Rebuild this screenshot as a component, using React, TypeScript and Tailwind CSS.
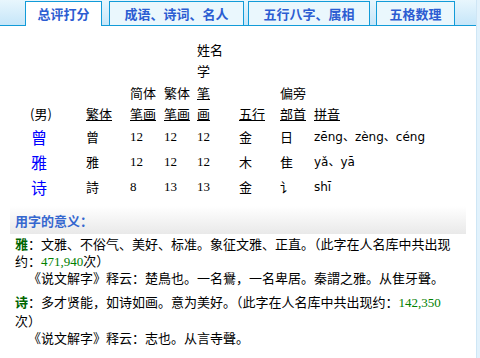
import React from "react";

const cjk = { fontFamily: '"Noto Sans CJK SC", sans-serif' };
const serif = { fontFamily: '"Liberation Serif", "Noto Sans CJK SC", serif' };
const pinyinFont = { fontFamily: '"DejaVu Sans", "Noto Sans CJK SC", sans-serif' };

const cols = ["w-[56px]", "w-[44px]", "w-[34px]", "w-[33px]", "w-[42px]", "w-[41px]", "w-[34px]", "flex-1"];

function Tab({ label, width, active }: { label: string; width: string; active?: boolean }) {
  return (
    <div
      className={`${width} flex items-center justify-center border-t border-l border-r border-[#129bd8] text-[13px] font-bold text-[#2c5dd2] ${
        active ? "h-[25px] bg-white -mb-px" : "h-[24px] bg-[#eaf7fd]"
      }`}
    >
      {label}
    </div>
  );
}

type Row = { ch: string; trad: string; s: string; t: string; n: string; wx: string; bs: string; py: string };

const rows: Row[] = [
  { ch: "曾", trad: "曾", s: "12", t: "12", n: "12", wx: "金", bs: "日", py: "zēng、zèng、céng" },
  { ch: "雅", trad: "雅", s: "12", t: "12", n: "12", wx: "木", bs: "隹", py: "yǎ、yā" },
  { ch: "诗", trad: "詩", s: "8", t: "13", n: "13", wx: "金", bs: "讠", py: "shī" },
];

export default function App() {
  return (
    <div className="w-[480px] h-[358px] flex bg-white overflow-hidden text-black" style={cjk}>
      <div className="w-[476px] flex flex-col">
        {/* tabs */}
        <div className="h-[26px] flex items-end border-b border-[#129bd8] bg-gradient-to-b from-[#e8f6fd] to-[#c6e6f9]">
          <div className="w-[25px]" />
          <Tab label="总评打分" width="w-[77px]" active />
          <div className="w-[7px]" />
          <Tab label="成语、诗词、名人" width="w-[135px]" />
          <div className="w-[4px]" />
          <Tab label="五行八字、属相" width="w-[122px]" />
          <div className="w-[6px]" />
          <Tab label="五格数理" width="w-[79px]" />
        </div>

        {/* table */}
        <div className="pl-[30px] pt-[13px] text-[13px]">
          <div className="flex items-end leading-[21px]">
            <div className={cols[0]}>(男)</div>
            <div className={cols[1]}>
              <span className="underline">繁体</span>
            </div>
            <div className={cols[2]}>
              <div>简体</div>
              <div className="underline">笔画</div>
            </div>
            <div className={cols[3]}>
              <div>繁体</div>
              <div className="underline">笔画</div>
            </div>
            <div className={cols[4]}>
              <div>姓名</div>
              <div className="mb-px">学</div>
              <div className="underline">笔</div>
              <div className="underline">画</div>
            </div>
            <div className={cols[5]}>
              <span className="underline">五行</span>
            </div>
            <div className={cols[6]}>
              <div>偏旁</div>
              <div className="underline">部首</div>
            </div>
            <div className={cols[7]}>
              <span className="underline">拼音</span>
            </div>
          </div>
          {rows.map((r) => (
            <div key={r.ch} className="flex items-center h-[25px]">
              <div className={`${cols[0]} pl-[1px] text-[16px] text-[#0000ff]`}>{r.ch}</div>
              <div className={cols[1]}>{r.trad}</div>
              <div className={cols[2]} style={serif}>{r.s}</div>
              <div className={cols[3]} style={serif}>{r.t}</div>
              <div className={cols[4]} style={serif}>{r.n}</div>
              <div className={cols[5]}>{r.wx}</div>
              <div className={cols[6]}>{r.bs}</div>
              <div className={`${cols[7]} text-[12px]`} style={pinyinFont}>{r.py}</div>
            </div>
          ))}
        </div>

        {/* meaning */}
        <div className="mt-[7px] ml-[10px] w-[456px] h-[28px] flex items-center pl-[5px] pt-[2px] bg-gradient-to-b from-white to-[#e9e9e9] text-[13px] font-bold text-[#3567cf]">
          用字的意义：
        </div>
        <div className="pl-[15px] pt-[1px] text-[13px]">
          <div className="h-[17px] leading-[17px]">
            <span className="font-bold text-[#006600]">雅</span>：文雅、不俗气、美好、标准。象征文雅、正直。（此字在人名库中共出现
          </div>
          <div className="h-[17px] leading-[17px]">
            约：<span className="text-[#008000]" style={serif}>471,940</span>次）
          </div>
          <div className="h-[17px] leading-[17px] pl-[13px]">《说文解字》释云：楚鳥也。一名鸒，一名卑居。秦謂之雅。从隹牙聲。</div>
          <div className="mt-[6px] h-[20px] leading-[19px]">
            <span className="font-bold text-[#006600]">诗</span>：多才贤能，如诗如画。意为美好。（此字在人名库中共出现约：
            <span className="text-[#008000]" style={serif}>142,350</span>
          </div>
          <div className="h-[17px] leading-[17px]">次）</div>
          <div className="h-[17px] leading-[17px] pl-[13px]">《说文解字》释云：志也。从言寺聲。</div>
        </div>
      </div>
      <div className="w-[4px] border-l border-[#cfe6f5] bg-[#e2f2fc]" />
    </div>
  );
}
